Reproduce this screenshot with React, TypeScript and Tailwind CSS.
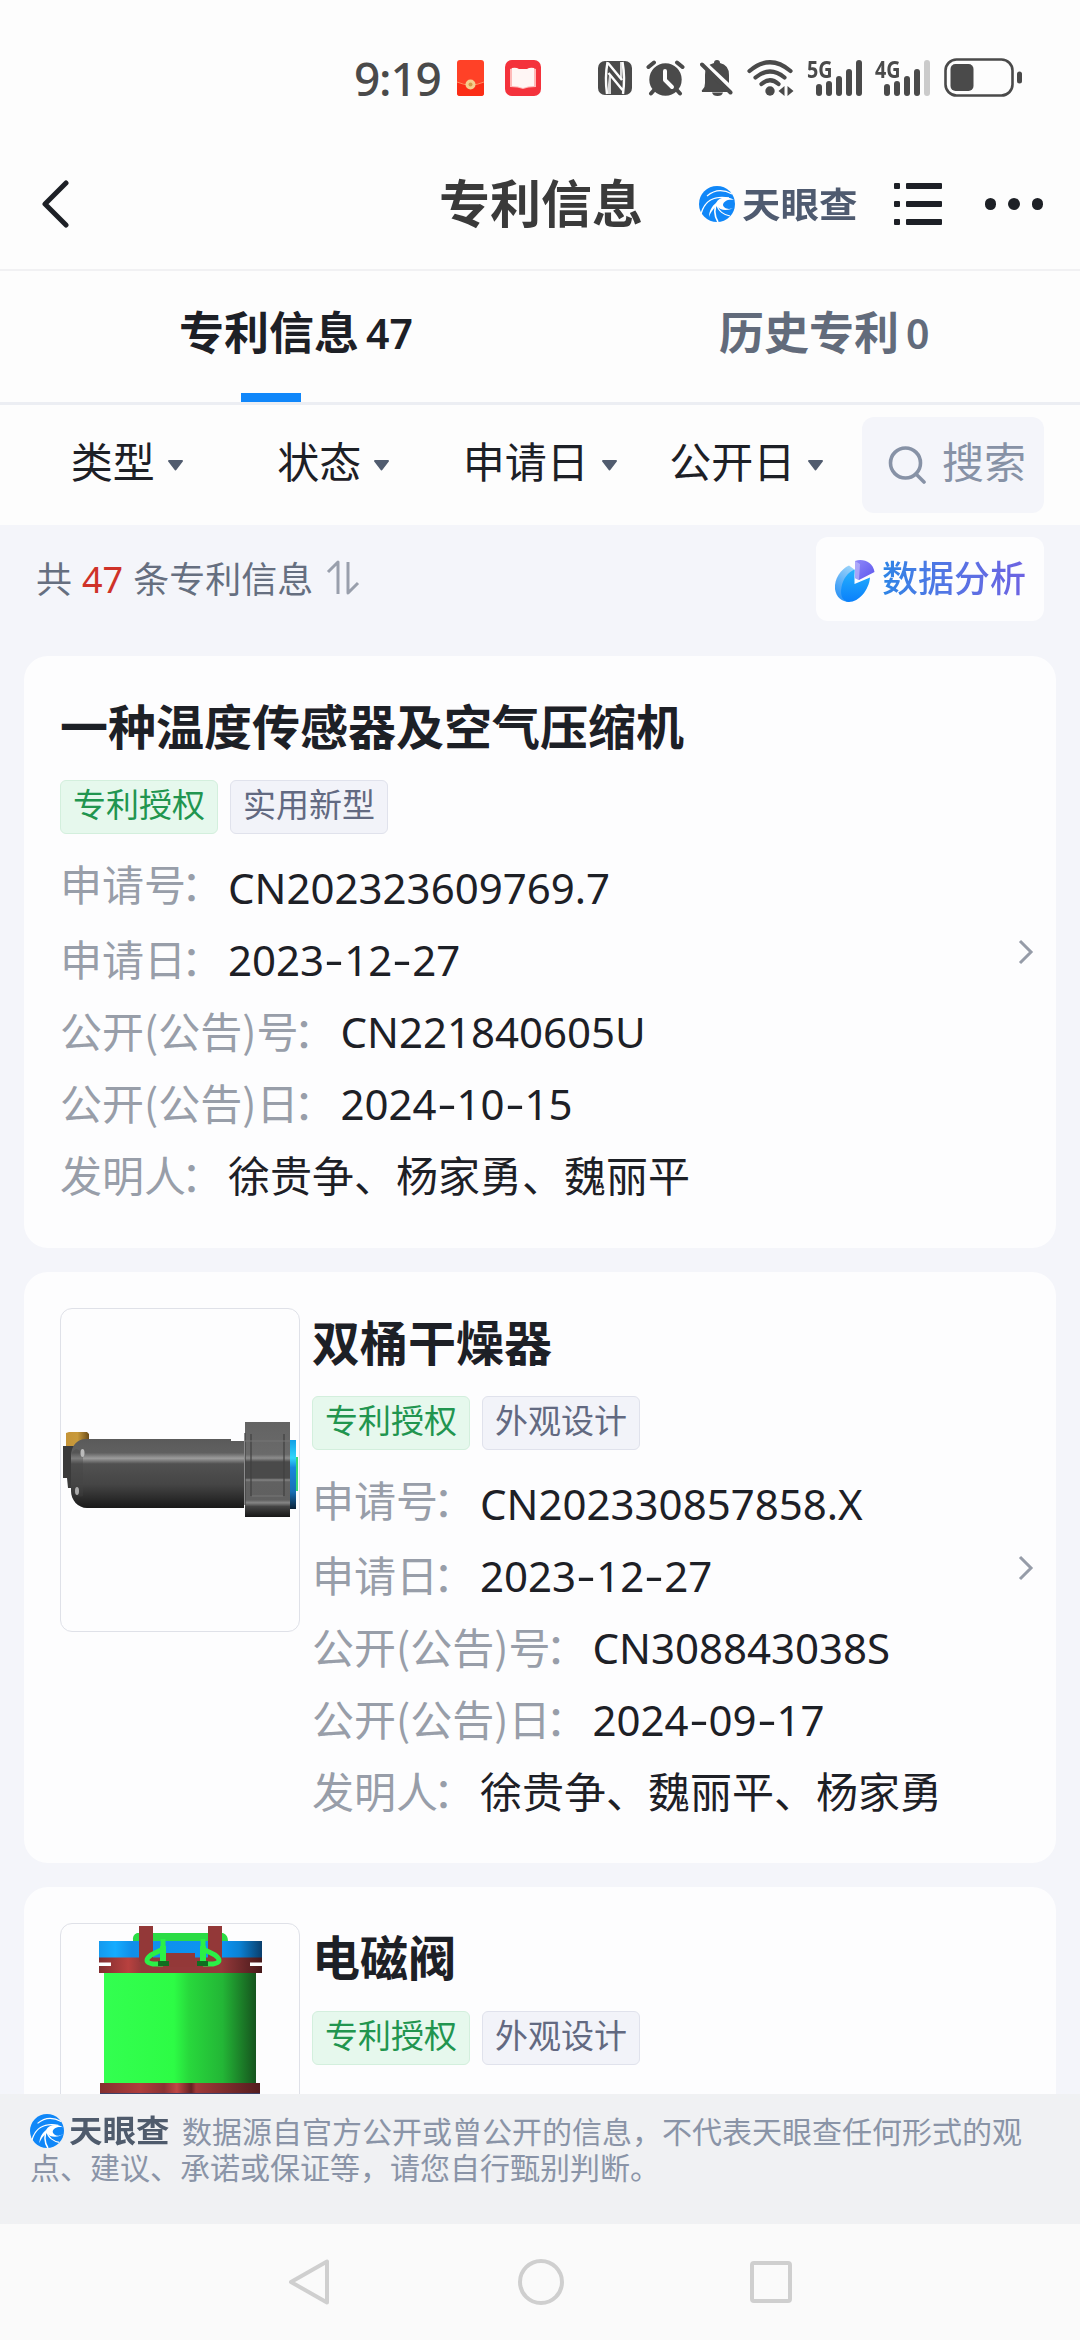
import type { ReactNode } from "react";

type Field = { label: string; value: string };

type Patent = {
  title: string;
  kind: string;
  thumb?: ReactNode;
  fields: Field[];
};

const CJK = "font-['Noto_Sans_CJK_SC',sans-serif]";
const LATIN = "font-['Noto_Sans','Noto_Sans_CJK_SC',sans-serif]";

const FILTERS = ["类型", "状态", "申请日", "公开日"];

const PATENTS: Patent[] = [
  {
    title: "一种温度传感器及空气压缩机",
    kind: "实用新型",
    fields: [
      { label: "申请号", value: "CN202323609769.7" },
      { label: "申请日", value: "2023-12-27" },
      { label: "公开(公告)号", value: "CN221840605U" },
      { label: "公开(公告)日", value: "2024-10-15" },
      { label: "发明人", value: "徐贵争、杨家勇、魏丽平" },
    ],
  },
  {
    title: "双桶干燥器",
    kind: "外观设计",
    thumb: <DryerDrawing />,
    fields: [
      { label: "申请号", value: "CN202330857858.X" },
      { label: "申请日", value: "2023-12-27" },
      { label: "公开(公告)号", value: "CN308843038S" },
      { label: "公开(公告)日", value: "2024-09-17" },
      { label: "发明人", value: "徐贵争、魏丽平、杨家勇" },
    ],
  },
  {
    title: "电磁阀",
    kind: "外观设计",
    thumb: <ValveDrawing />,
    fields: [],
  },
];

function DryerDrawing() {
  return (
    <svg viewBox="0 0 238 322" className="h-full w-full">
      <defs>
        <linearGradient id="tube" x1="0" y1="0" x2="0" y2="1">
          <stop offset="0" stopColor="#5a5a5a" />
          <stop offset="0.2" stopColor="#606060" />
          <stop offset="0.28" stopColor="#9c9c9c" />
          <stop offset="0.36" stopColor="#515151" />
          <stop offset="0.66" stopColor="#454545" />
          <stop offset="1" stopColor="#191919" />
        </linearGradient>
        <linearGradient id="collar" x1="0" y1="0" x2="0" y2="1">
          <stop offset="0" stopColor="#636363" />
          <stop offset="0.34" stopColor="#6a6a6a" />
          <stop offset="0.38" stopColor="#8d8d8d" />
          <stop offset="0.42" stopColor="#4a4a4a" />
          <stop offset="0.59" stopColor="#4a4a4a" />
          <stop offset="0.61" stopColor="#858585" />
          <stop offset="0.63" stopColor="#616161" />
          <stop offset="0.82" stopColor="#606060" />
          <stop offset="0.85" stopColor="#858585" />
          <stop offset="0.89" stopColor="#444" />
          <stop offset="1" stopColor="#161616" />
        </linearGradient>
        <linearGradient id="cap" x1="0" y1="0" x2="0" y2="1">
          <stop offset="0" stopColor="#119fe6" />
          <stop offset="0.26" stopColor="#31d6fb" />
          <stop offset="0.4" stopColor="#1787dd" />
          <stop offset="0.75" stopColor="#176fb5" />
          <stop offset="1" stopColor="#0b2238" />
        </linearGradient>
        <linearGradient id="brass" x1="0" y1="0" x2="1" y2="0">
          <stop offset="0" stopColor="#c59437" />
          <stop offset="0.5" stopColor="#c89a3c" />
          <stop offset="1" stopColor="#6b4c19" />
        </linearGradient>
      </defs>
      <path d="M5 124l3-1h18l2 2v14H5z" fill="url(#brass)" />
      <path d="M2 137h15v44h-7v-2H7l-1-10H2z" fill="#3a3a3a" />
      <path d="M25 130h145v2h13v67H26c-9 0-16-8-16-17v-35c0-10 6-17 15-17z" fill="url(#tube)" />
      <path d="M10 147c2-9 9-9 12 0v40c-5 2-12-2-12-9z" fill="#444" opacity="0.35" />
      <ellipse cx="21.500" cy="144" rx="2" ry="4" fill="#bbb" />
      <ellipse cx="16" cy="182" rx="2" ry="4" fill="#aaa" />
      <path d="M184 113h45v95h-45z" fill="url(#collar)" />
      <path d="M184 124v72M190 125v62M223 125v62" stroke="#404040" strokeWidth="1.2" />
      <path d="M184 132h45M191 187h31" stroke="#777" strokeWidth="1" />
      <path d="M229 131h6v69h-6z" fill="url(#cap)" />
      <path d="M235 148h2v34h-2z" fill="#36d979" />
    </svg>
  );
}

function ValveDrawing() {
  return (
    <svg viewBox="0 0 238 322" className="h-full w-full">
      <defs>
        <linearGradient id="body">
          <stop offset="0" stopColor="#33ff50" />
          <stop offset="0.46" stopColor="#2dfc45" />
          <stop offset="0.56" stopColor="#28d83c" />
          <stop offset="0.78" stopColor="#23b636" />
          <stop offset="1" stopColor="#16541e" />
        </linearGradient>
        <linearGradient id="ring">
          <stop offset="0" stopColor="#1499ee" />
          <stop offset="0.1" stopColor="#14acff" />
          <stop offset="0.2" stopColor="#108eea" />
          <stop offset="0.75" stopColor="#0c95f3" />
          <stop offset="0.86" stopColor="#0b82d5" />
          <stop offset="1" stopColor="#0a3e6c" />
        </linearGradient>
        <linearGradient id="flange">
          <stop offset="0" stopColor="#802d2f" />
          <stop offset="0.18" stopColor="#b8413f" />
          <stop offset="0.26" stopColor="#94393a" />
          <stop offset="0.75" stopColor="#94393a" />
          <stop offset="1" stopColor="#47191b" />
        </linearGradient>
        <linearGradient id="base">
          <stop offset="0" stopColor="#842f2f" />
          <stop offset="0.25" stopColor="#b03d3c" />
          <stop offset="0.4" stopColor="#8b3233" />
          <stop offset="0.48" stopColor="#c14745" />
          <stop offset="0.57" stopColor="#652123" />
          <stop offset="0.6" stopColor="#a13938" />
          <stop offset="1" stopColor="#541d1f" />
        </linearGradient>
      </defs>
      <path d="M38 17h163v17H38z" fill="url(#ring)" />
      <path d="M76 9h86q5 2 5 8H72q-1-6 4-8z" fill="#2bdc45" />
      <path d="M38 33.500h163v5h-12v3.500h12v7H38v-7h12v-3.500H38z" fill="url(#flange)" />
      <path d="M78 2h14v36H78zM147 2h14v36h-14z" fill="#933838" />
      <path d="M105 29h29v14h-29z" fill="#933838" />
      <path
        d="M102 15v10l-12 6q-9 7 2 9h10M142 15v10l12 6q9 7-2 9h-10"
        fill="none"
        stroke="#2bf047"
        strokeWidth="5"
        strokeLinejoin="round"
      />
      <path d="M102 22v16M142 22v16" stroke="#2bf047" strokeWidth="6" />
      <path d="M97 37h11v5H97zM136 37h11v5h-11z" fill="#106d20" />
      <path d="M43 49h152v111H43z" fill="url(#body)" />
      <path d="M39 159h160v11H39z" fill="url(#base)" />
      <path d="M39 169h160v20H39z" fill="#3d4168" />
    </svg>
  );
}

function LogoMark({ className }: { className?: string }) {
  return (
    <svg viewBox="0 0 36 36" className={className}>
      <circle cx="18" cy="18" r="18" fill="#1087f8" />
      <g fill="none" stroke="#fff">
        <path d="M8 10C15 4 24 3 33 8" strokeWidth="1.200" />
        <path d="M2 28C5 16 14 9 30 12" strokeWidth="1.300" />
        <path d="M19 36C15 30 15 22 18 17" strokeWidth="1.600" />
        <path d="M31 30C25 29 19 25 18 19" strokeWidth="1.200" />
      </g>
      <path d="M17 17C20 11 28 10 35 14C29 13 24.500 15 24 19C24.500 22 30 25 35.500 21C31 25 21 25.500 18 20C16 21 12 25 10 31C10 25 13 20 17 17z" fill="#fff" />
    </svg>
  );
}

function NfcIcon() {
  return (
    <svg viewBox="0 0 34 34" className="h-[34px] w-[34px]">
      <rect width="34" height="34" rx="7" fill="#4a4a4a" />
      <path
        d="M9.500 1C7.500 12 7.500 22 9 33M10 2l14 17M10.500 12l14 17M25 33C26.500 22 26.500 12 24.500 1"
        fill="none"
        stroke="#fdfdfd"
        strokeWidth="2.400"
      />
      <path d="M11 14l2 2v17H9zM24 19l-2-2V1h3z" fill="#fdfdfd" opacity="0.8" />
    </svg>
  );
}

function AlarmIcon() {
  return (
    <svg viewBox="0 0 39 36" className="h-9 w-[39px]">
      <g stroke="#4a4a4a" strokeWidth="4" strokeLinecap="round">
        <path d="M2.500 7L8 2.500M36.500 7L31 2.500M9 29l-4 4.500M30 29l4 4.500" />
      </g>
      <circle cx="19.500" cy="19.500" r="16.200" fill="#4a4a4a" />
      <path d="M19 11v9l7 7" fill="none" stroke="#fdfdfd" strokeWidth="4" strokeLinecap="round" strokeLinejoin="round" />
    </svg>
  );
}

function MutedIcon() {
  return (
    <svg viewBox="0 0 33 36" className="h-9 w-[33px]">
      <path
        d="M2 32q-1-1.500 1-3 2-2 2-6V15q0-10 9-12 0-3 3-3t3 3q9 2 9 12v8q0 4 3 7v2z"
        fill="#4a4a4a"
      />
      <path d="M12 32.500h11q-1 3.500-5.500 3.500t-5.500-3.500z" fill="#4a4a4a" />
      <path d="M2 0.500L34 30.500" stroke="#fdfdfd" strokeWidth="4" />
      <path d="M2 4.500L30.500 32.500" stroke="#4a4a4a" strokeWidth="4" strokeLinecap="round" />
    </svg>
  );
}

function WifiIcon() {
  return (
    <svg viewBox="0 0 47 36" className="h-9 w-[47px]">
      <g fill="none" stroke="#4a4a4a" strokeWidth="4.200" strokeLinecap="round">
        <path d="M2.500 11Q23 -6.500 43.500 11" />
        <path d="M8.500 17.500Q23 5.500 37.500 17.500" />
        <path d="M14.500 24Q23 16.500 31.500 24" />
      </g>
      <circle cx="23" cy="31" r="4.700" fill="#4a4a4a" />
      <path d="M31.500 31l6-5v10zM46.500 31l-6-5v10z" fill="#4a4a4a" />
    </svg>
  );
}

function Signal({ label, weak }: { label: string; weak?: boolean }) {
  return (
    <div className="relative flex h-9 w-[54px] items-end gap-1 pl-2">
      <span className="absolute -left-px -top-[3px] origin-left scale-x-[0.82] font-['Noto_Sans',sans-serif] text-[24px] font-bold leading-6 text-[#4a4a4a]">
        {label}
      </span>
      <i className="h-3 w-1.5 shrink-0 rounded-full bg-[#4a4a4a]" />
      <i className="h-[15px] w-1.5 shrink-0 rounded-full bg-[#4a4a4a]" />
      <i className="h-5 w-1.5 shrink-0 rounded-full bg-[#4a4a4a]" />
      <i className="h-[27px] w-1.5 shrink-0 rounded-full bg-[#4a4a4a]" />
      <i className={`h-9 w-1.5 shrink-0 rounded-full ${weak ? "bg-[#cbcbcb]" : "bg-[#4a4a4a]"}`} />
    </div>
  );
}

function StatusBar() {
  return (
    <div className="flex h-[106px] shrink-0 items-start pl-[354px] pt-[60px]">
      <span className="-mt-1 w-[90px] font-['Noto_Sans',sans-serif] text-[46px] font-medium leading-[44px] tracking-[-1.200px] text-[#4a4a4a]">
        9:19
      </span>
      {/* red packet */}
      <svg viewBox="0 0 27 36" className="ml-[13px] h-9 w-[27px]">
        <rect width="27" height="36" rx="3" fill="#ff4127" />
        <path d="M0 22q13.500 5 27 0v11q0 3-3 3H3q-3 0-3-3z" fill="#fb2d16" />
        <path d="M0 22q13.500 6 27 0" fill="none" stroke="#ff8b5d" />
        <circle cx="13.500" cy="24.500" r="5" fill="#f5cf8e" />
        <circle cx="13.500" cy="24.500" r="2" fill="#d69a4a" />
      </svg>
      <svg viewBox="0 0 36 36" className="ml-[21px] h-9 w-9">
        <rect width="36" height="36" rx="7" fill="#f4323c" />
        <path d="M5 9q5-2 8 0h10q3-2 8 0v18q-8 0-13 2-5-2-13-2z" fill="#ffb9b8" />
        <path d="M7 8q4-1 7 1h8q3-2 7-1v18q-6 0-11 2-5-2-11-2z" fill="#fff6f5" />
      </svg>
      <div className="ml-[57px] flex">
        <div className="pt-px"><NfcIcon /></div>
        <div className="ml-[14px]"><AlarmIcon /></div>
        <div className="ml-[15px]"><MutedIcon /></div>
        <div className="ml-[14px]"><WifiIcon /></div>
        <div className="ml-[14px]"><Signal label="5G" /></div>
        <div className="ml-[14px]"><Signal label="4G" weak /></div>
      </div>
      <svg viewBox="0 0 78 40" className="-mt-0.5 ml-[14px] h-10 w-[78px]">
        <rect x="1.500" y="1.500" width="67" height="36" rx="11" fill="none" stroke="#4a4a4a" strokeWidth="2.600" />
        <rect x="6.500" y="6" width="23" height="27" rx="5" fill="#4a4a4a" />
        <rect x="73" y="13.500" width="5" height="12" rx="2.500" fill="#4a4a4a" />
      </svg>
    </div>
  );
}

function Header() {
  return (
    <header className="flex h-[165px] shrink-0 items-start border-b-2 border-[#f1f1f3] pt-16">
      <svg viewBox="0 0 28 48" className="ml-[41px] mt-2.5 h-12 w-7">
        <path d="M25 3L4 24l21 21" fill="none" stroke="#1d2026" strokeWidth="5" strokeLinecap="round" strokeLinejoin="round" />
      </svg>
      <h1 className="ml-[370px] w-[204px] text-[51px] font-bold leading-[62px] text-[#3a3a3a]">专利信息</h1>
      <div className="ml-14 mt-4 flex items-center">
        <LogoMark className="h-9 w-9" />
        <span className="-mt-1 ml-[7px] scale-y-[0.92] text-[38.500px] font-bold leading-9 text-[#4f5b70]">天眼查</span>
      </div>
      <svg viewBox="0 0 48 42" className="ml-9 mt-[13px] h-[42px] w-12" fill="#1d2026">
        <rect width="6" height="6" rx="1" />
        <rect x="12" width="36" height="6" rx="1" />
        <rect y="18" width="6" height="6" rx="1" />
        <rect x="12" y="18" width="36" height="6" rx="1" />
        <rect y="36" width="6" height="6" rx="1" />
        <rect x="12" y="36" width="36" height="6" rx="1" />
      </svg>
      <div className="ml-[43px] mt-7 flex gap-3">
        <i className="h-[11.500px] w-[11.500px] rounded-full bg-[#1d2026]" />
        <i className="h-[11.500px] w-[11.500px] rounded-full bg-[#1d2026]" />
        <i className="h-[11.500px] w-[11.500px] rounded-full bg-[#1d2026]" />
      </div>
    </header>
  );
}

function Tab({ name, count, active }: { name: string; count: number; active?: boolean }) {
  return (
    <div className={`relative flex flex-1 justify-center ${active ? "text-[#1d2026]" : "text-[#626b7b]"}`}>
      <span className="relative -left-px text-[45px] font-bold leading-[120px]">
        {name}
        <span className="absolute left-full top-0.5 ml-[7px] font-['Noto_Sans',sans-serif] text-[41px] font-semibold">
          {count}
        </span>
      </span>
      {active && <i className="absolute bottom-0 left-[241px] h-[9px] w-[60px] bg-[#1087fa]" />}
    </div>
  );
}

function FilterBar() {
  return (
    <div className="flex h-[120px] shrink-0 items-center gap-3 pl-6 pr-9">
      <div className="flex flex-1">
        {FILTERS.map((name) => (
          <div key={name} className="flex flex-1 items-center justify-center gap-3">
            <span className="-mt-[11px] text-[42px] leading-[60px] text-[#1d2026]">{name}</span>
            <svg viewBox="0 0 17 11" className="h-[11px] w-[17px]">
              <path d="M2 1h13L8.500 9.500z" fill="#515c6f" stroke="#515c6f" strokeWidth="2" strokeLinejoin="round" />
            </svg>
          </div>
        ))}
      </div>
      <div className="flex h-24 w-[182px] items-center rounded-xl bg-[#f4f5fa] pl-[26px] text-[#8792a6]">
        <svg viewBox="0 0 38 38" className="h-[38px] w-[38px]" fill="none" stroke="currentColor" strokeWidth="3.600">
          <circle cx="17.500" cy="17" r="15" />
          <path d="M28 28l8 8" strokeLinecap="round" />
        </svg>
        <span className="-mt-[11px] ml-4 text-[42px] leading-[60px]">搜索</span>
      </div>
    </div>
  );
}

function SummaryBar() {
  return (
    <div className="flex h-[131px] shrink-0 items-start justify-between pl-9 pr-9 pt-3">
      <div className="flex items-baseline pt-[14px] text-[36px] leading-[52px] text-[#666f80]">
        <span>共</span>
        <span className="mx-2.5 font-['Noto_Sans',sans-serif] leading-none text-[#cf3228]">47</span>
        <span>条专利信息</span>
        <svg viewBox="0 0 34 36" className="ml-[13px] h-9 w-[34px] translate-y-[3px]" fill="none" stroke="#999fac" strokeWidth="3">
          <path d="M2 12L12 2v32M22 2v31L32 23" strokeLinejoin="round" />
        </svg>
      </div>
      <div className="flex h-[84px] w-[228px] items-start rounded-xl bg-[#fdfdfe]">
        <svg viewBox="0 0 42 44" className="ml-[18px] mt-[22px] h-11 w-[42px]">
          <defs>
            <linearGradient id="pie" x1="0.500" y1="0" x2="0.500" y2="1">
              <stop offset="0" stopColor="#26b2fd" />
              <stop offset="1" stopColor="#0a80fb" />
            </linearGradient>
            <linearGradient id="rim" x1="0.700" y1="0" x2="0.300" y2="1">
              <stop offset="0" stopColor="#9ad3fa" />
              <stop offset="1" stopColor="#2690f5" />
            </linearGradient>
            <linearGradient id="slice" x1="0" y1="0" x2="1" y2="1">
              <stop offset="0" stopColor="#8f88f8" />
              <stop offset="1" stopColor="#5c55ee" />
            </linearGradient>
          </defs>
          <path d="M15 6.500C7 10 0 20 1 30C2 38 8 43 15 43L21 11z" fill="url(#rim)" />
          <path d="M20.500 10.500V25L36 18.500C35 31 25 43 15 43C8 42 6 36 7.500 28C9 20 14 13 20.500 10.500z" fill="url(#pie)" />
          <path d="M21 2C29-1 39 3 40.500 13L25 21L21 19z" fill="url(#slice)" />
          <path d="M21 2l5 3-1 16-4-2z" fill="#bcb8fb" opacity="0.7" />
        </svg>
        <span className="ml-[6px] mt-[13px] bg-gradient-to-r from-[#2b84e6] to-[#6d62e2] bg-clip-text text-[36px] font-medium leading-[52px] text-transparent">
          数据分析
        </span>
      </div>
    </div>
  );
}

function FieldRow({ label, value, raised }: Field & { raised?: boolean }) {
  return (
    <div className="flex h-[72px] items-baseline text-[42px] leading-[72px]">
      <span className={`whitespace-nowrap text-[#989ea9] ${raised ? "-translate-y-[3px]" : ""}`}>
        {label}
        <span className="-ml-[5px] mr-[5px]">：</span>
      </span>
      <span className={`whitespace-nowrap leading-none text-[#1d2026] ${LATIN}`}>
        {value.split("-").map((part, i) => (
          <span key={i}>
            {i > 0 && <span className="inline-block w-5 -translate-y-px scale-x-[1.4] text-center">-</span>}
            {part}
          </span>
        ))}
      </span>
    </div>
  );
}

function PatentCard({ patent }: { patent: Patent }) {
  return (
    <article className="mx-6 mb-6 flex h-[591.500px] shrink-0 items-start rounded-3xl bg-[#fdfdfe] pl-9 pr-[22px] pt-9">
      {patent.thumb && (
        <div className="mr-3 h-[324px] w-[240px] shrink-0 overflow-hidden rounded-xl border border-[#dfe1e8]">
          {patent.thumb}
        </div>
      )}
      <div className="flex-1">
        <h2 className="h-16 text-[48px] font-bold leading-[64px] text-[#1d2026]">{patent.title}</h2>
        <div className="mb-4 mt-6 flex gap-3 text-[33px] leading-[45px]">
          <span className="h-[54px] rounded-md border border-[#d3efdd] bg-[#e6f8ed] px-3 text-[#21954f]">专利授权</span>
          <span className="h-[54px] rounded-md border border-[#e0e2ec] bg-[#f2f3f9] px-3 text-[#626981]">{patent.kind}</span>
        </div>
        {patent.fields.map((field, i) => (
          <FieldRow key={field.label} {...field} raised={i === 0} />
        ))}
      </div>
      <svg viewBox="0 0 16 26" className="mt-[247px] h-[26px] w-4">
        <path d="M2 2l11 11L2 24" fill="none" stroke="#969ca8" strokeWidth="3" />
      </svg>
    </article>
  );
}

export default function App() {
  return (
    <div className={`flex h-[2340px] w-[1080px] flex-col overflow-hidden bg-[#fdfdfd] ${CJK}`}>
      <StatusBar />
      <Header />
      <nav className="flex h-[134px] shrink-0 border-b-[3px] border-[#eceef3]">
        <Tab name="专利信息" count={47} active />
        <Tab name="历史专利" count={0} />
      </nav>
      <FilterBar />

      <main className="flex h-[1569px] shrink-0 flex-col overflow-hidden bg-[#f4f5fa]">
        <SummaryBar />
        {PATENTS.map((p) => (
          <PatentCard key={p.title} patent={p} />
        ))}
      </main>

      <footer className="h-[130px] shrink-0 bg-[#f0f1f3] px-[30px] pt-[19px] text-[30px] leading-[35px] text-[#8a94a7]">
        <div className="flex h-[35px] items-center whitespace-nowrap">
          <LogoMark className="h-[34px] w-[34px] shrink-0" />
          <span className="-mt-1 ml-[5px] mr-[12px] w-[101px] scale-y-[0.92] text-[33.500px] font-bold leading-[34px] text-[#4f5b6c]">
            天眼查
          </span>
          <span>数据源自官方公开或曾公开的信息，不代表天眼查任何形式的观</span>
        </div>
        <p className="pt-px">点、建议、承诺或保证等，请您自行甄别判断。</p>
      </footer>

      {/* system navigation */}
      <div className="flex h-[116px] shrink-0 items-center justify-between bg-[#fafafa] pl-[287px] pr-[288px]">
        <svg viewBox="0 0 44 50" className="h-[50px] w-11" fill="none" stroke="#cfcfcf" strokeWidth="4">
          <path d="M40 4.500v41L4 25z" strokeLinejoin="round" />
        </svg>
        <i className="h-[46px] w-[46px] rounded-full border-4 border-[#cfcfcf]" />
        <i className="h-[42px] w-[42px] rounded border-4 border-[#cfcfcf]" />
      </div>
    </div>
  );
}
